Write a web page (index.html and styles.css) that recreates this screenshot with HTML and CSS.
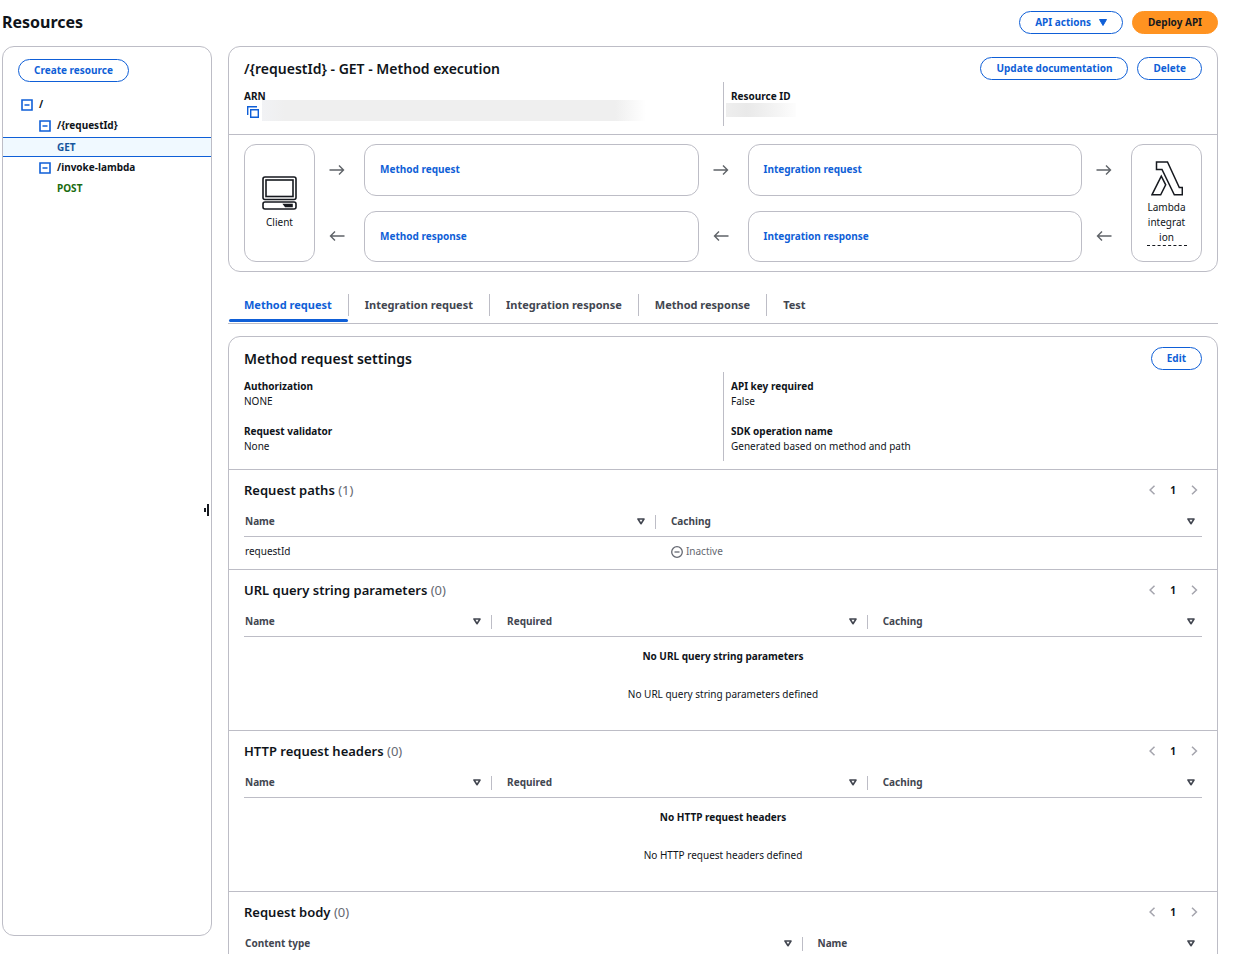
FILE: index.html
```html
<!DOCTYPE html>
<html lang="en">
<head>
<meta charset="utf-8">
<title>Resources</title>
<link rel="stylesheet" href="styles.css">
</head>
<body>
<svg class="defs" aria-hidden="true">
  <symbol id="minus-box" viewBox="0 0 12 12"><path d="M1 1h10v10H1z" fill="none" stroke="currentColor" stroke-width="1.6"/><path d="M3.500 6h5" stroke="currentColor" stroke-width="1.500"/></symbol>
  <symbol id="sort" viewBox="0 0 8 7"><path d="M1 1h6L4 5.700z" fill="none" stroke="currentColor" stroke-width="1.600" stroke-linejoin="round"/></symbol>
  <symbol id="prev" viewBox="0 0 8 10"><path d="M6.500.8 2.100 5 6.500 9.200" fill="none" stroke="currentColor" stroke-width="1.500"/></symbol>
  <symbol id="next" viewBox="0 0 8 10"><path d="M2 .8 6.400 5 2 9.200" fill="none" stroke="currentColor" stroke-width="1.500"/></symbol>
  <symbol id="right" viewBox="0 0 16 10"><path d="M.5 5h14M10 .5 14.500 5 10 9.500" fill="none" stroke="currentColor" stroke-width="1.400"/></symbol>
  <symbol id="left" viewBox="0 0 16 10"><path d="M15.500 5h-14M6 .5 1.500 5 6 9.500" fill="none" stroke="currentColor" stroke-width="1.400"/></symbol>
</svg>
<div class="app">
  <header class="page-header">
    <h1>Resources</h1>
    <div class="actions">
      <button class="btn" type="button">API actions <svg class="caret" viewBox="0 0 8 7"><path d="M.5.5h7L4 6.500z" fill="currentColor" stroke="currentColor" stroke-linejoin="round"/></svg></button>
      <button class="btn primary" type="button">Deploy API</button>
    </div>
  </header>
  <div class="columns">
    <nav class="sidebar" aria-label="Resources">
      <div class="create"><button class="btn" type="button">Create resource</button></div>
      <ul class="tree">
        <li class="node"><button class="toggle" type="button" aria-label="Collapse /"><svg><use href="#minus-box"/></svg></button><span>/</span></li>
        <li class="node level-2"><button class="toggle" type="button" aria-label="Collapse /{requestId}"><svg><use href="#minus-box"/></svg></button><span>/{requestId}</span></li>
        <li class="node method selected"><a class="get" href="#get">GET</a></li>
        <li class="node level-2"><button class="toggle" type="button" aria-label="Collapse /invoke-lambda"><svg><use href="#minus-box"/></svg></button><span>/invoke-lambda</span></li>
        <li class="node method"><a class="post" href="#post">POST</a></li>
      </ul>
      <span class="resize" role="separator"></span>
    </nav>
    <main class="content">
      <section class="card">
        <div class="card-head">
          <h2>/{requestId} - GET - Method execution</h2>
          <div class="actions"><button class="btn" type="button">Update documentation</button><button class="btn" type="button">Delete</button></div>
        </div>
        <dl class="pairs">
          <div class="pair-col">
            <div class="pair"><dt>ARN</dt><dd class="arn"><button class="copy" type="button" aria-label="Copy ARN"><svg viewBox="0 0 12 12"><path d="M.7 9V.7H10" fill="none" stroke="currentColor" stroke-width="1.400"/><path d="M3.700 3.700h7.600v7.600H3.700z" fill="#fff" stroke="currentColor" stroke-width="1.400"/></svg></button><span class="redacted arn-value"></span></dd></div>
          </div>
          <div class="pair-col">
            <div class="pair"><dt>Resource ID</dt><dd class="rid"><span class="redacted rid-value"></span></dd></div>
          </div>
        </dl>
        <div class="flow">
          <div class="endpoint">
            <svg class="client" viewBox="0 0 35 34" fill="none" stroke="#16191f" stroke-width="1.600"><rect x="1" y="1" width="33" height="22.500" rx="2"/><rect x="4" y="4" width="27" height="16.500"/><rect x="1" y="26" width="33" height="7" rx="2"/><path d="M22 28.500h8v2h-6.500z" fill="#16191f"/></svg>
            <span>Client</span>
          </div>
          <div class="arrows"><svg><use href="#right"/></svg><svg><use href="#left"/></svg></div>
          <div class="steps"><a class="step" href="#mreq">Method request</a><a class="step" href="#mres">Method response</a></div>
          <div class="arrows"><svg><use href="#right"/></svg><svg><use href="#left"/></svg></div>
          <div class="steps"><a class="step" href="#ireq">Integration request</a><a class="step" href="#ires">Integration response</a></div>
          <div class="arrows"><svg><use href="#right"/></svg><svg><use href="#left"/></svg></div>
          <div class="endpoint">
            <svg class="lambda" viewBox="0 0 32 35" fill="none" stroke="#16191f" stroke-width="1.500"><path d="M5.500 1h11l11.800 25.500h3v7.300h-8L11 8.500H5.500zM10.300 15.200.9 33.800h8.800l5-10z"/></svg>
            <span class="integration">Lambda integrat<wbr>ion</span>
          </div>
        </div>
      </section>
      <div class="tabs" role="tablist">
        <button class="tab active" role="tab" aria-selected="true" type="button">Method request</button>
        <button class="tab" role="tab" type="button">Integration request</button>
        <button class="tab" role="tab" type="button">Integration response</button>
        <button class="tab" role="tab" type="button">Method response</button>
        <button class="tab" role="tab" type="button">Test</button>
      </div>
      <section class="card">
        <div class="card-head">
          <h2>Method request settings</h2>
          <button class="btn" type="button">Edit</button>
        </div>
        <dl class="pairs">
          <div class="pair-col">
            <div class="pair"><dt>Authorization</dt><dd>NONE</dd></div>
            <div class="pair"><dt>Request validator</dt><dd>None</dd></div>
          </div>
          <div class="pair-col">
            <div class="pair"><dt>API key required</dt><dd>False</dd></div>
            <div class="pair"><dt>SDK operation name</dt><dd>Generated based on method and path</dd></div>
          </div>
        </dl>
        <div class="block">
          <div class="block-head"><h3>Request paths <span>(1)</span></h3>
            <div class="pager"><button type="button" aria-label="Previous page" disabled><svg><use href="#prev"/></svg></button><b>1</b><button type="button" aria-label="Next page" disabled><svg><use href="#next"/></svg></button></div></div>
          <table class="two">
            <thead><tr><th><div>Name<svg><use href="#sort"/></svg></div></th><th><div>Caching<svg><use href="#sort"/></svg></div></th></tr></thead>
            <tbody><tr><td>requestId</td><td><span class="inactive"><svg viewBox="0 0 12 12" fill="none" stroke="currentColor" stroke-width="1.300"><circle cx="6" cy="6" r="5.300"/><path d="M3.500 6h5"/></svg>Inactive</span></td></tr></tbody>
          </table>
        </div>
        <div class="block">
          <div class="block-head"><h3>URL query string parameters <span>(0)</span></h3>
            <div class="pager"><button type="button" aria-label="Previous page" disabled><svg><use href="#prev"/></svg></button><b>1</b><button type="button" aria-label="Next page" disabled><svg><use href="#next"/></svg></button></div></div>
          <table class="three">
            <thead><tr><th><div>Name<svg><use href="#sort"/></svg></div></th><th><div>Required<svg><use href="#sort"/></svg></div></th><th><div>Caching<svg><use href="#sort"/></svg></div></th></tr></thead>
          </table>
          <div class="empty"><b>No URL query string parameters</b><p>No URL query string parameters defined</p></div>
        </div>
        <div class="block">
          <div class="block-head"><h3>HTTP request headers <span>(0)</span></h3>
            <div class="pager"><button type="button" aria-label="Previous page" disabled><svg><use href="#prev"/></svg></button><b>1</b><button type="button" aria-label="Next page" disabled><svg><use href="#next"/></svg></button></div></div>
          <table class="three">
            <thead><tr><th><div>Name<svg><use href="#sort"/></svg></div></th><th><div>Required<svg><use href="#sort"/></svg></div></th><th><div>Caching<svg><use href="#sort"/></svg></div></th></tr></thead>
          </table>
          <div class="empty"><b>No HTTP request headers</b><p>No HTTP request headers defined</p></div>
        </div>
        <div class="block">
          <div class="block-head"><h3>Request body <span>(0)</span></h3>
            <div class="pager"><button type="button" aria-label="Previous page" disabled><svg><use href="#prev"/></svg></button><b>1</b><button type="button" aria-label="Next page" disabled><svg><use href="#next"/></svg></button></div></div>
          <table class="wide">
            <thead><tr><th><div>Content type<svg><use href="#sort"/></svg></div></th><th><div>Name<svg><use href="#sort"/></svg></div></th></tr></thead>
          </table>
        </div>
      </section>
    </main>
  </div>
</div>
</body>
</html>
```
FILE: styles.css
```css
* { box-sizing: border-box; }
body {
  margin: 0;
  background: #fff;
  color: #0f141a;
  font: 10px/15px "Noto Sans", "Open Sans", sans-serif;
}
h1, h2, h3, p, dl, dd, ul { margin: 0; padding: 0; }
h1 { font-size: 16px; line-height: 24px; }
h2 { font-size: 14px; line-height: 24px; font-weight: 600; }
h3 { font-size: 13px; line-height: 20px; font-weight: 600; }
h3 span { color: #656871; font-weight: 400; }
button { font: inherit; color: inherit; background: none; border: 0; padding: 0; cursor: pointer; }
svg { display: block; flex: none; }
a { text-decoration: none; }
.defs { position: absolute; width: 0; height: 0; }

.app { display: flex; flex-direction: column; height: 100vh; padding: 10px 17px 0 2px; overflow: hidden; }
.page-header { display: flex; justify-content: space-between; height: 36px; flex: none; }
.page-header .actions { padding-top: 1px; }
.actions { display: flex; gap: 9px; align-items: flex-start; }
.columns { display: flex; gap: 16px; flex: 1; min-height: 0; }

.btn {
  display: inline-flex;
  align-items: center;
  gap: 8px;
  height: 23px;
  padding: 0 15px;
  border: 1px solid #0f5fd7;
  border-radius: 12px;
  color: #0f5fd7;
  font-weight: 700;
  white-space: nowrap;
}
.primary { background: #ff9321; border-color: #ff9321; color: #16191f; }
.caret { width: 8px; height: 7px; }

.sidebar { position: relative; flex: none; width: 210px; margin-bottom: 18px; border: 1px solid #bdbdc6; border-radius: 12px; }
.create { padding: 12px 15px; }
.tree { list-style: none; }
.node { display: flex; align-items: center; gap: 6px; height: 21px; padding-left: 18px; font-weight: 700; }
.level-2 { padding-left: 36px; }
.method { padding-left: 54px; }
.selected { height: 20px; margin-top: 1px; background: #f0f9ff; border: solid #0f5fd7; border-width: 1px 0; }
.get { color: #16569e; }
.post { color: #1a6b10; }
.toggle, .toggle svg { width: 12px; height: 12px; color: #0f5fd7; }
.resize { position: absolute; right: 2px; top: calc(50% + 13px); width: 2px; height: 12px; background: #16191f; }
.resize::before { content: ""; position: absolute; right: 3px; top: 4px; width: 2px; height: 4px; background: #16191f; }

.content { flex: 1; min-width: 0; overflow-y: auto; scrollbar-width: none; }
.card { border: 1px solid #bdbdc6; border-radius: 12px; }
.card-head { display: flex; justify-content: space-between; align-items: flex-start; height: 35px; padding: 10px 15px 0; }
.pairs { display: grid; grid-template-columns: 1fr 1fr; padding-bottom: 8px; }
.pair-col { display: flex; flex-direction: column; gap: 15px; padding: 7px 7px 7px 15px; }
.pair-col + .pair-col { padding-left: 7px; border-left: 1px solid #bdbdc6; }
.pair dt { font-weight: 700; }
.pair dd { height: 15px; }
.arn, .rid { position: relative; }
.copy { display: block; padding: 2px 3px; }
.copy svg { width: 12px; height: 12px; color: #0f5fd7; }
.redacted { position: absolute; }
.arn-value { left: 18px; top: -4px; width: 384px; height: 21px; background: linear-gradient(90deg, #f1f2f5, #efefef 6%, #efefef 92%, #fff); }
.rid-value { left: -5px; top: -1px; width: 70px; height: 14px; background: linear-gradient(90deg, #eee, #e9e9e9 30%, #f5f5f5 75%, #fdfdfd); }

.flow { display: grid; grid-template-columns: 71px 49px 1fr 49px 1fr 49px 71px; padding: 9px 15px; border-top: 1px solid #bdbdc6; }
.endpoint { display: flex; flex-direction: column; align-items: center; justify-content: center; min-height: 118px; padding: 0 15px; border: 1px solid #bdbdc6; border-radius: 12px; }
.client { width: 35px; height: 34px; margin-bottom: 5px; }
.lambda { width: 32px; height: 35px; margin-bottom: 4px; }
.integration { width: 40px; text-align: center; border-bottom: 1px dashed #16191f; }
.steps, .arrows { display: grid; grid-template-rows: 1fr 1fr; gap: 15px; align-items: center; }
.arrows { justify-items: center; padding-right: 5px; color: #5f6368; }
.arrows svg { width: 16px; height: 10px; }
.step { display: flex; align-items: center; align-self: stretch; padding: 0 15px; border: 1px solid #bdbdc6; border-radius: 12px; color: #0f5fd7; font-weight: 700; }

.tabs { display: flex; margin: 16px 0 12px; padding-top: 6px; border-bottom: 1px solid #bdbdc6; }
.tab { position: relative; height: 22px; margin-bottom: 7px; padding: 0 16px 2px; border-right: 1px solid #bdbdc6; color: #424650; font-size: 11px; font-weight: 700; }
.tab:last-child { border: 0; }
.active { color: #0f5fd7; }
.active::after { content: ""; position: absolute; left: 1px; right: 0; bottom: -6px; height: 3px; border-radius: 2px; background: #0f5fd7; }

.block { padding: 0 15px; border-top: 1px solid #bdbdc6; }
.block:last-child { padding-bottom: 28px; }
.block-head { display: flex; justify-content: space-between; align-items: center; height: 37px; padding-top: 3px; }
.pager { display: flex; align-items: center; gap: 14px; padding-right: 4px; }
.pager button { color: #a4a4ad; }
.pager svg { width: 8px; height: 10px; }
table { width: 100%; table-layout: fixed; border-collapse: separate; border-spacing: 0; }
th { height: 30px; padding: 0; border-bottom: 1px solid #bdbdc6; color: #424650; font-weight: 700; text-align: left; }
th div { display: flex; align-items: center; justify-content: space-between; height: 14px; padding: 0 10px 0 15px; border-right: 1px solid #bdbdc6; }
th:first-child div { padding-left: 1px; }
th:last-child div { padding-right: 7px; border: 0; }
th svg { width: 8px; height: 7px; }
td { height: 32px; padding: 0 15px 3px; }
td:first-child { padding-left: 1px; }
.two th:first-child { width: 43%; }
.three th:first-child { width: 25.9%; }
.three th:nth-child(2) { width: 39.2%; }
.wide th:first-child { width: 58.3%; }
.inactive { display: flex; align-items: center; gap: 3px; color: #656871; }
.inactive svg { width: 12px; height: 12px; }
.empty { padding: 12px 0 28px; text-align: center; }
.empty p { margin-top: 23px; }
```
